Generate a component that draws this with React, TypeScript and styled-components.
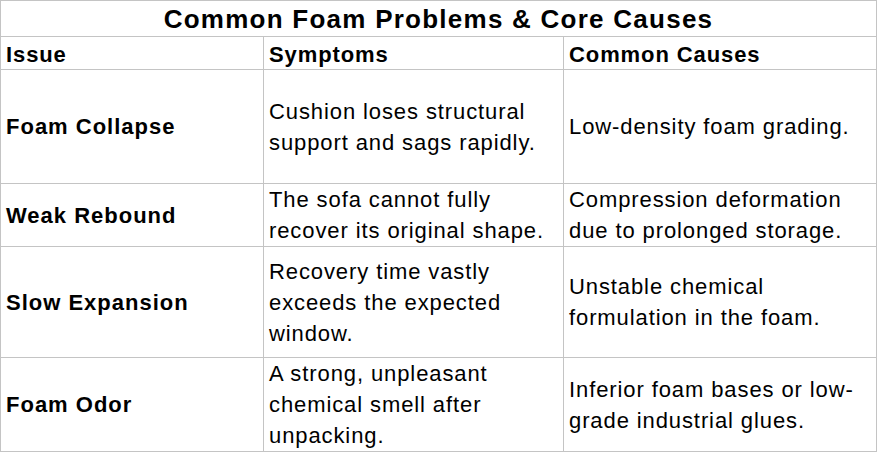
import React from "react";
import styled, { createGlobalStyle } from "styled-components";

const Global = createGlobalStyle`
  html, body { margin: 0; padding: 0; background: #ffffff; }
  body { font-family: "Liberation Sans", Arial, sans-serif; color: #000; }
`;

const Grid = styled.div`
  display: grid;
  width: 875px;
  grid-template-columns: 262px 299px 312px;
  grid-template-rows: 35px 32px 113px 62px 110px 93px;
  gap: 1px;
  padding: 1px;
  background: #c4c4c4;
`;

const Title = styled.div`
  grid-column: 1 / span 3;
  background: #fff;
  display: flex;
  align-items: center;
  justify-content: center;
  font-weight: 700;
  font-size: 26px;
  letter-spacing: 1.25px;
  padding-top: 2px;
`;

const Head = styled.div`
  background: #fff;
  display: flex;
  align-items: flex-end;
  padding: 0 5px 2px 5px;
  font-weight: 700;
  font-size: 22px;
  line-height: 25px;
  letter-spacing: 0.9px;
`;

const Cell = styled.div<{ $bold?: boolean }>`
  background: #fff;
  display: flex;
  flex-direction: column;
  justify-content: center;
  padding: 0 5px;
  font-size: 22px;
  line-height: 31px;
  font-weight: ${(p) => (p.$bold ? 700 : 400)};
  letter-spacing: ${(p) => (p.$bold ? "1px" : "0.9px")};
  white-space: nowrap;
`;

const rows: { issue: string; symptoms: string[]; causes: string[] }[] = [
  {
    issue: "Foam Collapse",
    symptoms: ["Cushion loses structural", "support and sags rapidly."],
    causes: ["Low-density foam grading."],
  },
  {
    issue: "Weak Rebound",
    symptoms: ["The sofa cannot fully", "recover its original shape."],
    causes: ["Compression deformation", "due to prolonged storage."],
  },
  {
    issue: "Slow Expansion",
    symptoms: ["Recovery time vastly", "exceeds the expected", "window."],
    causes: ["Unstable chemical", "formulation in the foam."],
  },
  {
    issue: "Foam Odor",
    symptoms: ["A strong, unpleasant", "chemical smell after", "unpacking."],
    causes: ["Inferior foam bases or low-", "grade industrial glues."],
  },
];

const Lines = ({ lines }: { lines: string[] }) => (
  <>
    {lines.map((l, i) => (
      <span key={i}>{l}</span>
    ))}
  </>
);

export default function App() {
  return (
    <>
      <Global />
      <Grid>
        <Title>Common Foam Problems &amp; Core Causes</Title>
        <Head>Issue</Head>
        <Head>Symptoms</Head>
        <Head>Common Causes</Head>
        {rows.map((r) => (
          <React.Fragment key={r.issue}>
            <Cell $bold>{r.issue}</Cell>
            <Cell>
              <Lines lines={r.symptoms} />
            </Cell>
            <Cell>
              <Lines lines={r.causes} />
            </Cell>
          </React.Fragment>
        ))}
      </Grid>
    </>
  );
}
